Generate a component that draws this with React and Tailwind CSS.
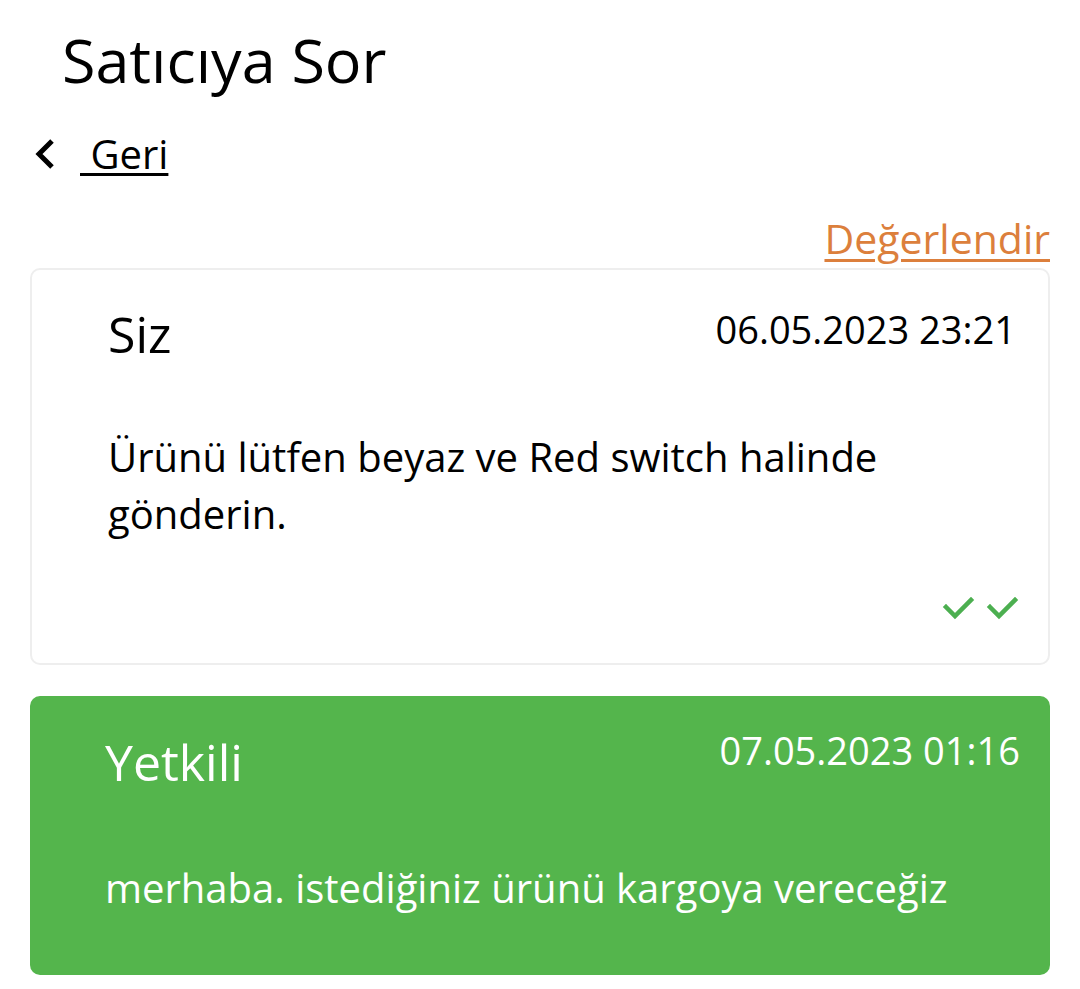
function DoubleCheck() {
  return (
    <svg width="80" height="28" viewBox="0 0 80 28" fill="none" stroke="#4caf50" strokeWidth="4.5" strokeLinecap="square">
      <path d="M4 14 L13 23 L29 7" />
      <path d="M48 14 L57 23 L73 7" />
    </svg>
  );
}

function Chevron() {
  return (
    <svg width="24" height="34" viewBox="0 0 24 34" fill="none" stroke="#000" strokeWidth="5" strokeLinecap="butt" strokeLinejoin="miter">
      <path d="M19 4 L6 17 L19 30" />
    </svg>
  );
}

export default function App() {
  return (
    <div className="min-h-screen bg-white text-black" style={{ fontFamily: "'Open Sans', Lato, sans-serif" }}>
      <h1 className="pl-[62px] pt-[22px] text-[61px] leading-[76px]">Satıcıya Sor</h1>

      <div className="flex items-center pl-[33px] mt-[32px] h-[48px]">
        <Chevron />
        <span className="ml-[23px] text-[40px] leading-[48px] underline underline-offset-[4px] decoration-[3px]">
          &nbsp;Geri
        </span>
      </div>

      <div className="px-[30px] mt-[36px]">
        <div className="flex justify-end">
          <a className="text-[41px] leading-[48px] text-[#dc7f3c] underline underline-offset-[5px] decoration-[3px]">
            Değerlendir
          </a>
        </div>

        <div className="mt-[6px] border-2 border-[#eeeeee] rounded-[10px] h-[397px] pl-[76px] pr-[32px] pt-[34px] flex flex-col">
          <div className="flex justify-between items-start">
            <span className="text-[50px] leading-[60px]">Siz</span>
            <span className="text-[38px] leading-[44px] mt-[3px]">06.05.2023 23:21</span>
          </div>
          <p className="mt-[64px] text-[40px] leading-[57px]">
            Ürünü lütfen beyaz ve Red switch halinde gönderin.
          </p>
          <div className="mt-auto mb-[42px] mr-[-6px] flex justify-end">
            <DoubleCheck />
          </div>
        </div>

        <div className="mt-[31px] bg-[#54b54c] text-white rounded-[10px] h-[279px] pl-[75px] pr-[30px] pt-[36px]">
          <div className="flex justify-between items-start">
            <span className="text-[50px] leading-[60px]">Yetkili</span>
            <span className="text-[38px] leading-[44px] mt-[-4px]">07.05.2023 01:16</span>
          </div>
          <p className="mt-[72px] text-[40px] leading-[48px]">merhaba. istediğiniz ürünü kargoya vereceğiz</p>
        </div>
      </div>
    </div>
  );
}
